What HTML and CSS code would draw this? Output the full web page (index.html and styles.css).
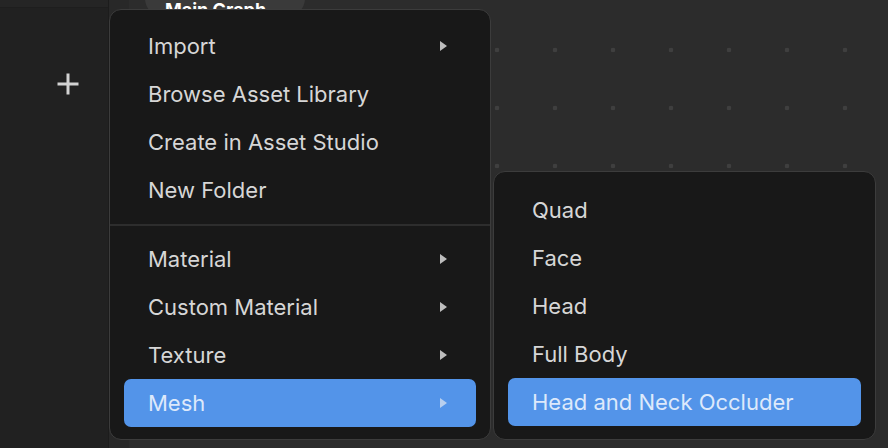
FILE: index.html
```html
<!DOCTYPE html>
<html>
	<head>
		<meta charset="UTF-8">
		<title>Main Graph</title>
		<link rel="stylesheet" href="styles.css">
	</head>
	<body>
		<div id="app">
			<div class="sidebar">
				<div class="sidebar-top"></div>
				<div class="add-button">
					<svg width="24" height="24" viewBox="0 0 24 24">
						<path d="M12 1.5V22.5M1.5 12H22.5" stroke="#d2d2d2" stroke-width="3" fill="none"/>
					</svg>
				</div>
			</div>
			<div class="gutter"></div>
			<div class="canvas">
				<div class="tab">Main Graph</div>
			</div>
		</div>

		<!-- context menu -->
		<div class="menu main-menu">
			<div class="item">Import<span class="arrow"></span></div>
			<div class="item">Browse Asset Library</div>
			<div class="item">Create in Asset Studio</div>
			<div class="item">New Folder</div>
			<div class="divider"></div>
			<div class="item">Material<span class="arrow"></span></div>
			<div class="item">Custom Material<span class="arrow"></span></div>
			<div class="item">Texture<span class="arrow"></span></div>
			<div class="item active">Mesh<span class="arrow"></span></div>
		</div>

		<div class="menu sub-menu">
			<div class="item">Quad</div>
			<div class="item">Face</div>
			<div class="item">Head</div>
			<div class="item">Full Body</div>
			<div class="item active">Head and Neck Occluder</div>
		</div>
	</body>
</html>
```
FILE: styles.css
```css
body{
	margin: 0;
	background: #2b2b2b;
	font-family: Inter, "Noto Sans", sans-serif;
	overflow: hidden;
}
#app{
	width: 888px;
	height: 448px;
	display: flex;
}
.sidebar{
	width: 108px;
	background: #212121;
	display: flex;
	flex-direction: column;
}
.sidebar-top{
	height: 7px;
	background: #252525;
	border-bottom: 1px solid #1e1e1e;
}
.add-button{
	margin: 64px 0 0 56px;
	width: 24px;
	height: 24px;
}
.gutter{
	width: 20px;
	background: #282828;
	border-left: 1px solid #1c1c1c;
}
.canvas{
	flex: 1;
	background-color: #2c2c2c;
	background-image: radial-gradient(circle, #3f3f3f 2px, transparent 2.6px);
	background-size: 58px 58px;
	background-position: -9px 21px;
	overflow: hidden;
}
.tab{
	width: 160px;
	height: 40px;
	margin: -22px 0 0 16px;
	background: #3a3a3a;
	border-radius: 20px;
	color: #ffffff;
	font-size: 18px;
	font-weight: 700;
	line-height: 22px;
	box-sizing: border-box;
	padding: 21px 0 0 20px;
}

.menu{
	position: absolute;
	box-sizing: border-box;
	background: #181818;
	border: 1px solid #3c3c3c;
	border-radius: 12px;
	padding: 12px 14px 13px 14px;
}
.main-menu{
	left: 109px;
	top: 9px;
	width: 382px;
	height: 431px;
}
.sub-menu{
	left: 493px;
	top: 171px;
	width: 383px;
	height: 269px;
	padding-top: 14px;
}
.item{
	height: 48px;
	display: flex;
	align-items: center;
	justify-content: space-between;
	padding: 0 29px 0 24px;
	color: #d6d6d6;
	font-size: 22px;
	border-radius: 7px;
}
.item.active{
	background: #5394e9;
	color: #dde9fb;
}
.arrow{
	width: 0;
	height: 0;
	border-left: 7px solid #bdbdbd;
	border-top: 5px solid transparent;
	border-bottom: 5px solid transparent;
}
.item.active .arrow{
	border-left-color: #b8cfee;
}
.divider{
	height: 2px;
	background: #2d2d2d;
	margin: 10px -14px 9px -14px;
}
```
